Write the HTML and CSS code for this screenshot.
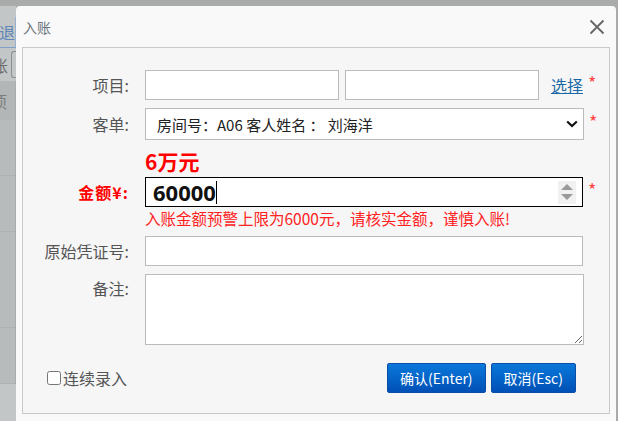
FILE: index.html
```html
<!DOCTYPE html>
<html>
<head>
  <meta charset="utf-8">
  <title>入账</title>
  <link rel="stylesheet" href="styles.css">
</head>
<body>
  <div class="screen">
    <!-- page behind the dialog -->
    <div class="backdrop">
      <div class="bd-tab"><span>出退</span></div>
      <div class="bd-search"><span class="bd-clip">账</span><i class="bd-box"></i></div>
      <div class="bd-head"><span>项</span></div>
      <div class="bd-row"></div>
      <div class="bd-row"></div>
      <div class="bd-row tall"></div>
      <div class="bd-row"></div>
    </div>

    <div class="dialog">
      <div class="dialog-header">
        <span class="dialog-title">入账</span>
        <svg class="close" width="16" height="16" viewBox="0 0 16 16">
          <path d="M1.5 1.5 L14.5 14.5 M14.5 1.5 L1.5 14.5" stroke="#666" stroke-width="1.8" fill="none"/>
        </svg>
      </div>

      <form class="panel">
        <div class="row">
          <label class="row-label">项目:</label>
          <div class="field split">
            <input type="text" class="half">
            <input type="text" class="half">
            <a href="#" class="pick">选择</a>
          </div>
          <span class="req">*</span>
        </div>

        <div class="row">
          <label class="row-label">客单:</label>
          <div class="select-wrap">
            <select class="field select">
              <option>房间号：A06 客人姓名 ： 刘海洋</option>
            </select>
            <svg class="chevron" width="12" height="8" viewBox="0 0 12 8">
              <path d="M1.2 1.5 L6 6 L10.8 1.5" stroke="#111" stroke-width="2.2" fill="none"/>
            </svg>
          </div>
          <span class="req">*</span>
        </div>

        <div class="amount-hint">6万元</div>
        <div class="row amount-row">
          <label class="row-label warn">金额¥:</label>
          <div class="field amount-box">
            <span class="amount-value">60000</span><span class="caret"></span>
            <span class="spin"><i class="up"></i><i class="down"></i></span>
          </div>
          <span class="req">*</span>
        </div>
        <div class="amount-warn">入账金额预警上限为6000元，请核实金额，谨慎入账!</div>

        <div class="row voucher-row">
          <label class="row-label">原始凭证号:</label>
          <input type="text" class="field">
        </div>

        <div class="row note-row">
          <label class="row-label">备注:</label>
          <textarea class="field note"></textarea>
        </div>

        <div class="actions">
          <label class="keep"><input type="checkbox">连续录入</label>
          <div class="buttons">
            <button type="button" class="btn">确认(Enter)</button>
            <button type="button" class="btn">取消(Esc)</button>
          </div>
        </div>
      </form>
    </div>
  </div>
</body>
</html>
```

FILE: styles.css
```css
* {
  box-sizing: border-box;
}
body {
  margin: 0;
  font-family: "Noto Sans CJK SC", "Noto Sans", sans-serif;
  background: #a9abab;
  overflow: hidden;
}
.screen {
  display: flex;
  height: 421px;
  padding-top: 6px;
}

/* background page */
.backdrop {
  width: 16px;
  display: flex;
  flex-direction: column;
  background: #c3c6c6;
  overflow: hidden;
}
.bd-tab {
  margin-top: 11px;
  height: 31px;
  display: flex;
  justify-content: flex-end;
  align-items: center;
  border-bottom: 1px solid #7f9fc6;
  border-right: 1px solid #98b1d0;
  color: #5f86b8;
  font-size: 16px;
  white-space: nowrap;
}
.bd-search {
  height: 33px;
  display: flex;
  align-items: center;
}
.bd-clip {
  width: 11px;
  display: flex;
  justify-content: flex-end;
  overflow: hidden;
  color: #6a6d6d;
  font-size: 16px;
  padding-right: 3px;
}
.bd-box {
  flex: 1;
  height: 27px;
  border: 1px solid #8d9090;
  border-right: none;
  border-radius: 3px 0 0 3px;
}
.bd-head {
  height: 39px;
  background: #b3b6b6;
  display: flex;
  justify-content: flex-end;
  align-items: center;
  overflow: hidden;
  color: #7a7d7d;
  font-size: 16px;
  padding-right: 8px;
  border-right: 1px solid #a9acac;
}
.bd-row {
  height: 56px;
  background: #b8bbbb;
  border-bottom: 1px solid #aeb1b1;
  border-right: 1px solid #a9acac;
}
.bd-row.tall {
  height: 96px;
}

/* dialog */
.dialog {
  width: 600px;
  display: flex;
  flex-direction: column;
  background: #f9f9f9;
  border-radius: 4px 4px 0 0;
}
.dialog-header {
  height: 41px;
  display: flex;
  align-items: center;
  justify-content: space-between;
  padding: 0 11px 0 7px;
}
.dialog-title {
  font-size: 14px;
  color: #6c757d;
}
.panel {
  margin: 0 6px;
  height: 367px;
  background: #f6f6f6;
  border: 1px solid #c9c9c9;
  padding-top: 22px;
}

.row {
  display: flex;
  align-items: center;
}
.row + .row {
  margin-top: 8px;
}
.row-label {
  width: 106px;
  margin-right: 16px;
  text-align: right;
  font-size: 16px;
  color: #555;
}
.field {
  width: 438px;
  height: 30px;
  margin: 0;
  border: 1px solid #bbb;
  background: #fff;
  font-family: inherit;
}
.split {
  display: flex;
  align-items: center;
  border: none;
  background: none;
}
.half {
  width: 194px;
  height: 30px;
  margin: 0;
  border: 1px solid #bbb;
}
.half + .half {
  margin-left: 6px;
}
.pick {
  margin-left: auto;
  color: #1a69a6;
  font-size: 16px;
  white-space: nowrap;
}
.req {
  margin-left: 5px;
  margin-top: -6px;
  color: #f44;
  font-size: 18px;
}
.select-wrap {
  position: relative;
  width: 439px;
}
.select {
  width: 439px;
  height: 32px;
  padding: 0 24px 0 11px;
  font-size: 15px;
  color: #222;
  appearance: none;
  border-radius: 0;
}
.chevron {
  position: absolute;
  right: 6px;
  top: 12px;
}

.amount-hint {
  margin: 8px 0 0 122px;
  height: 26px;
  color: #f00;
  font-size: 21px;
  font-weight: bold;
  line-height: 26px;
}
.row.amount-row {
  margin-top: 3px;
}
.warn {
  color: #f00;
  font-weight: bold;
  letter-spacing: 1px;
}
.amount-box {
  display: flex;
  align-items: center;
  border-color: #000;
  padding-left: 7px;
}
.amount-value {
  font-family: "Noto Sans", sans-serif;
  font-size: 22px;
  font-weight: bold;
  color: #111;
}
.caret {
  width: 1px;
  height: 23px;
  background: #000;
}
.spin {
  margin-left: auto;
  margin-right: 6px;
  width: 18px;
  height: 23px;
  background: #f1f1f1;
  display: flex;
  flex-direction: column;
  align-items: center;
  justify-content: center;
  gap: 4px;
}
.up {
  border-left: 6px solid transparent;
  border-right: 6px solid transparent;
  border-bottom: 6px solid #9a9a9a;
}
.down {
  border-left: 6px solid transparent;
  border-right: 6px solid transparent;
  border-top: 6px solid #9a9a9a;
}
.amount-warn {
  margin: 1px 0 0 122px;
  height: 21px;
  color: #f22;
  font-size: 15.5px;
  line-height: 21px;
}
.row.voucher-row {
  margin-top: 7px;
}
.note-row {
  align-items: flex-start;
}
.note-row .row-label {
  padding-top: 2px;
}
.note {
  width: 439px;
  height: 71px;
  resize: both;
}

.actions {
  margin-top: 18px;
  padding: 0 33px 0 24px;
  display: flex;
  align-items: center;
  justify-content: space-between;
}
.keep {
  display: flex;
  align-items: center;
  font-size: 16px;
  color: #555;
}
.keep input {
  width: 14px;
  height: 14px;
  margin: 0 2px 0 0;
}
.buttons {
  display: flex;
  gap: 5px;
}
.btn {
  height: 30px;
  padding: 0 12px;
  font-family: inherit;
  font-size: 14px;
  color: #fff;
  background: linear-gradient(#0a78da, #0050b6);
  border: 1px solid #0a4ea6;
  border-radius: 2px;
  cursor: pointer;
}
```
